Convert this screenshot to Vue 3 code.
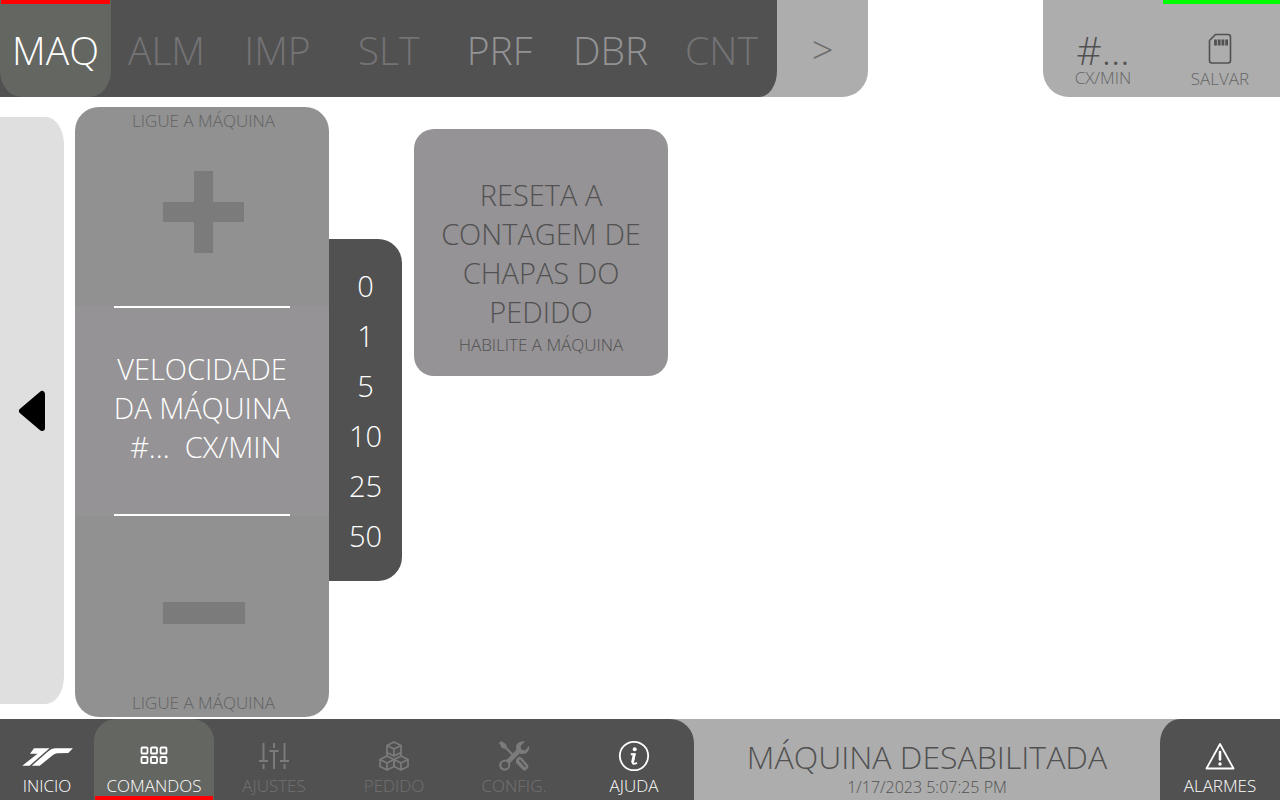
<script setup>
import { ref } from 'vue'

const tabs = [
  { label: 'MAQ', state: 'active' },
  { label: 'ALM', state: 'off' },
  { label: 'IMP', state: 'off' },
  { label: 'SLT', state: 'off' },
  { label: 'PRF', state: 'ready' },
  { label: 'DBR', state: 'ready' },
  { label: 'CNT', state: 'off' },
]
const steps = [0, 1, 5, 10, 25, 50]
const step = ref(null)
</script>

<template>
  <div class="screen">
    <header class="top">
      <nav class="tabs" aria-label="Seções">
        <button v-for="t in tabs" :key="t.label" type="button" class="tab" :class="t.state">{{ t.label }}</button>
      </nav>
      <button type="button" class="more">&gt;</button>
      <div class="tools">
        <div class="rate">
          <span class="rate-value">#...</span>
          <span class="caption">CX/MIN</span>
        </div>
        <button type="button" class="save">
          <svg width="24" height="32" viewBox="0 0 24 32" fill="none" stroke="#515151">
            <path d="M7.500 1.500H20Q22.500 1.500 22.500 4V27.500Q22.500 30 20 30H4Q1.500 30 1.500 27.500V7.500Z" stroke-width="1.600" stroke-linejoin="round" />
            <path d="M7.500 6.500V12.500M11.200 6.500V12.500M14.900 6.500V12.500M18.600 6.500V12.500" stroke-width="2.800" />
          </svg>
          <span class="caption">SALVAR</span>
        </button>
      </div>
    </header>

    <main class="work">
      <button type="button" class="drawer" aria-label="Abrir painel">
        <svg width="28" height="42" viewBox="0 0 28 42">
          <path d="M4 21L24 4V38Z" stroke="#000" stroke-width="6" stroke-linejoin="round" />
        </svg>
      </button>

      <section class="speed">
        <button type="button" class="adjust plus" aria-label="Aumentar velocidade">
          <span class="caption">LIGUE A MÁQUINA</span>
          <svg width="82" height="82" viewBox="0 0 82 82" fill="#7b7b7b">
            <path d="M31 0H50V31H81V51H50V82H31V51H0V31H31Z" />
          </svg>
        </button>
        <div class="reading">
          <p>VELOCIDADE<br>DA MÁQUINA</p>
          <p class="value">{{ ' #...  CX/MIN' }}</p>
        </div>
        <button type="button" class="adjust minus" aria-label="Diminuir velocidade">
          <svg width="82" height="22" viewBox="0 0 82 22" fill="#7b7b7b">
            <path d="M0 0H82V22H0Z" />
          </svg>
          <span class="caption">LIGUE A MÁQUINA</span>
        </button>
      </section>

      <div class="steps">
        <button v-for="s in steps" :key="s" type="button" class="step" @click="step = s">{{ s }}</button>
      </div>

      <button type="button" class="reset">
        <span class="reset-title">RESETA A CONTAGEM DE CHAPAS DO PEDIDO</span>
        <span class="caption">HABILITE A MÁQUINA</span>
      </button>
    </main>

    <footer class="bottom">
      <nav class="menu" aria-label="Principal">
        <button type="button" class="item home">
          <svg width="52" height="32" viewBox="0 0 52 32" fill="#fff">
            <path d="M1.300 25.700L16.500 13.700H9L13 8.300H28.500L8.500 25.700Z" />
            <path d="M10.800 25.700L27 11.500Q30.500 8.300 34 8.300H51.900L47.300 12.900L36.500 13.300Q34 13.500 32 15L18.700 25.700Z" />
          </svg>
          <span class="caption">INICIO</span>
        </button>
        <button type="button" class="item current">
          <svg width="32" height="32" viewBox="0 0 32 32" fill="none" stroke="#fff" stroke-width="1.800">
            <rect x="3.500" y="7.500" width="6" height="6" rx="1" />
            <rect x="13" y="7.500" width="6" height="6" rx="1" />
            <rect x="22.500" y="7.500" width="6" height="6" rx="1" />
            <rect x="3.500" y="17" width="6" height="6" rx="1" />
            <rect x="13" y="17" width="6" height="6" rx="1" />
            <rect x="22.500" y="17" width="6" height="6" rx="1" />
          </svg>
          <span class="caption">COMANDOS</span>
        </button>
        <button type="button" class="item dim">
          <svg width="32" height="32" viewBox="0 0 32 32" fill="none" stroke="#7b7b7b" stroke-width="2">
            <path d="M5.500 3V21M1 21H10M5.500 24V29M16 3V8M11.500 11H20.500M16 11V29M26.500 3V21M22 21H31M26.500 24V29" />
          </svg>
          <span class="caption">AJUSTES</span>
        </button>
        <button type="button" class="item dim">
          <svg width="32" height="32" viewBox="0 0 32 32" fill="none" stroke="#7b7b7b" stroke-width="1.700" stroke-linejoin="round">
            <path d="M16 2L23 5.500V12.500L16 16L9 12.500V5.500ZM9 5.500L16 9L23 5.500M16 9V16" />
            <path d="M9 16L16 19.500V26.500L9 30L2 26.500V19.500ZM2 19.500L9 23L16 19.500M9 23V30" />
            <path d="M23 16L30 19.500V26.500L23 30L16 26.500V19.500ZM16 19.500L23 23L30 19.500M23 23V30M9 12.500V16M23 12.500V16" />
          </svg>
          <span class="caption">PEDIDO</span>
        </button>
        <button type="button" class="item dim">
          <svg width="32" height="32" viewBox="0 0 32 32" fill="#7b7b7b">
            <path d="M1 3L3 1L8 4L9 7.500L17 15.500L15.500 17L7.500 9L4 8Z" />
            <path d="M31 6L27 10.500L23.500 9.500L22.500 6L27 1.500Q22 .5 19 4Q17.500 6.500 18.500 9.500L9 19.500Q4.500 19 2.200 22Q0 25.500 2.500 29Q6 32 10 29.500Q13 27 12 23L21.500 13.500Q25.500 15 29 12.500Q32 9.500 31 6Z" />
            <circle cx="6.900" cy="25" r="3.500" fill="#515151" />
            <path d="M18 19.500L21 16.500L24 18L30 25Q31 27 29.500 28.500L28 30Q26.500 31 25 30L18 23Z" />
            <path d="M21.500 20L27.500 27" stroke="#515151" stroke-width="1.600" />
          </svg>
          <span class="caption">CONFIG.</span>
        </button>
        <button type="button" class="item">
          <svg width="32" height="32" viewBox="0 0 32 32" fill="none" stroke="#fff">
            <circle cx="16" cy="16" r="14.200" stroke-width="1.800" />
            <circle cx="16.700" cy="9.300" r="2" fill="#fff" stroke="none" />
            <path d="M12.800 14.200H16.500L14.700 22Q14.200 25 19 22.800" stroke-width="2" />
            <path d="M16.400 13.500L14.500 22.500" stroke-width="2.800" />
          </svg>
          <span class="caption">AJUDA</span>
        </button>
      </nav>
      <div class="status">
        <span class="status-title">MÁQUINA DESABILITADA</span>
        <span class="caption">1/17/2023 5:07:25 PM</span>
      </div>
      <button type="button" class="item alarms">
        <svg width="32" height="32" viewBox="0 0 32 32" fill="none" stroke="#fff">
          <path d="M16 4L29.500 28.500H2.500Z" stroke-width="1.800" stroke-linejoin="round" />
          <path d="M16 12V19.500" stroke-width="2.600" stroke-linecap="round" />
          <circle cx="16" cy="24" r="1.700" fill="#fff" stroke="none" />
        </svg>
        <span class="caption">ALARMES</span>
      </button>
    </footer>
  </div>
</template>

<style>
body {
  background: #fff;
}
</style>

<style scoped>
.screen {
  display: flex;
  flex-direction: column;
  min-height: 100vh;
  font-family: "Open Sans", "Noto Sans", sans-serif;
  font-weight: 300;
  color: #515151;
}
button {
  padding: 0;
  border: 0;
  background: none;
  color: inherit;
  font: inherit;
  cursor: pointer;
}
p {
  margin: 0;
}
svg {
  display: block;
}
.caption {
  font-size: 17px;
  line-height: 24px;
}
.top {
  display: flex;
  height: 97px;
}
.tabs {
  display: flex;
  position: relative;
  background: #515151;
  border-bottom-right-radius: 18px 26px;
}
.tab {
  width: 111px;
  padding-top: 2px;
  font-size: 39px;
  line-height: 54px;
  color: #747376;
}
.tab.ready {
  color: #939395;
}
.tab.active {
  background: linear-gradient(#f00, #f00) center top / 109px 4px no-repeat, #646662;
  color: #fff;
  border-radius: 0 0 22px 22px / 0 0 26px 26px;
}
.more {
  width: 117px;
  margin-left: -26px;
  padding-left: 26px;
  background: #adadad;
  color: #6c6c6c;
  font-size: 38px;
  border-bottom-right-radius: 26px;
}
.tools {
  display: flex;
  margin-left: auto;
  background: #adadad;
  border-bottom-left-radius: 26px;
}
.rate,
.save {
  display: flex;
  flex-direction: column;
  align-items: center;
  justify-content: flex-end;
  box-sizing: border-box;
  width: 120px;
  padding-bottom: 7px;
  color: #666;
}
.save {
  width: 117px;
  padding: 0 3px 6px 0;
  border-top: 4px solid #0f0;
}
.save svg {
  margin-bottom: 2px;
}
.rate-value {
  font-size: 39px;
  line-height: 32px;
  color: #515151;
}
.work {
  display: flex;
  flex: 1;
  align-items: flex-start;
}
.drawer {
  display: flex;
  align-self: stretch;
  align-items: center;
  justify-content: center;
  width: 64px;
  margin: 20px 11px 15px 0;
  background: #dfdfdf;
  border-radius: 0 18px 18px 0 / 0 28px 28px 0;
}
.speed {
  display: grid;
  grid-template-rows: 199fr 210px 201fr;
  align-self: stretch;
  width: 254px;
  margin: 10px 0 2px;
  background: #919191;
  border-radius: 24px;
}
.adjust {
  display: flex;
  flex-direction: column;
  align-items: center;
  justify-content: space-between;
  color: #626262;
}
.adjust.plus {
  padding: 2px 0 53px 3px;
}
.adjust.minus {
  padding: 86px 0 2px 3px;
}
.reading {
  display: flex;
  flex-direction: column;
  align-items: center;
  justify-content: center;
  padding-bottom: 8px;
  background:
    linear-gradient(#fff, #fff) center top / 176px 2px no-repeat,
    linear-gradient(#fff, #fff) center bottom / 176px 2px no-repeat,
    #959395;
  color: #fff;
  font-size: 29px;
  line-height: 39px;
  text-align: center;
}
.value {
  white-space: pre;
}
.steps {
  display: flex;
  flex-direction: column;
  width: 73px;
  margin: 142px 12px 0 0;
  padding: 21px 0;
  background: #515151;
  border-radius: 0 24px 24px 0;
}
.step {
  height: 50px;
  color: #fff;
  font-size: 29px;
}
.reset {
  display: flex;
  flex-direction: column;
  align-items: center;
  width: 254px;
  margin-top: 32px;
  padding: 46px 20px 19px;
  background: #959395;
  border-radius: 20px;
}
.reset-title {
  margin-bottom: 2px;
  font-size: 29px;
  line-height: 39px;
}
.bottom {
  display: flex;
  height: 81px;
  background: #adadad;
}
.menu {
  display: flex;
  background: #515151;
  border-top-right-radius: 24px;
}
.item {
  display: flex;
  flex-direction: column;
  align-items: center;
  justify-content: flex-end;
  box-sizing: border-box;
  width: 120px;
  padding-bottom: 2px;
  color: #fff;
}
.item svg {
  margin-bottom: 2px;
}
.item.home {
  width: 94px;
}
.item.current {
  background: linear-gradient(#f00, #f00) center bottom / 118px 4px no-repeat, #646662;
  border-radius: 22px 22px 0 0;
}
.item.dim {
  color: #717173;
}
.status {
  display: flex;
  flex: 1;
  flex-direction: column;
  align-items: center;
  justify-content: flex-end;
  padding-bottom: 1px;
}
.status .caption {
  font-size: 16px;
}
.status-title {
  font-size: 32px;
  line-height: 36px;
}
.alarms {
  background: #515151;
  border-top-left-radius: 20px 24px;
}
</style>
